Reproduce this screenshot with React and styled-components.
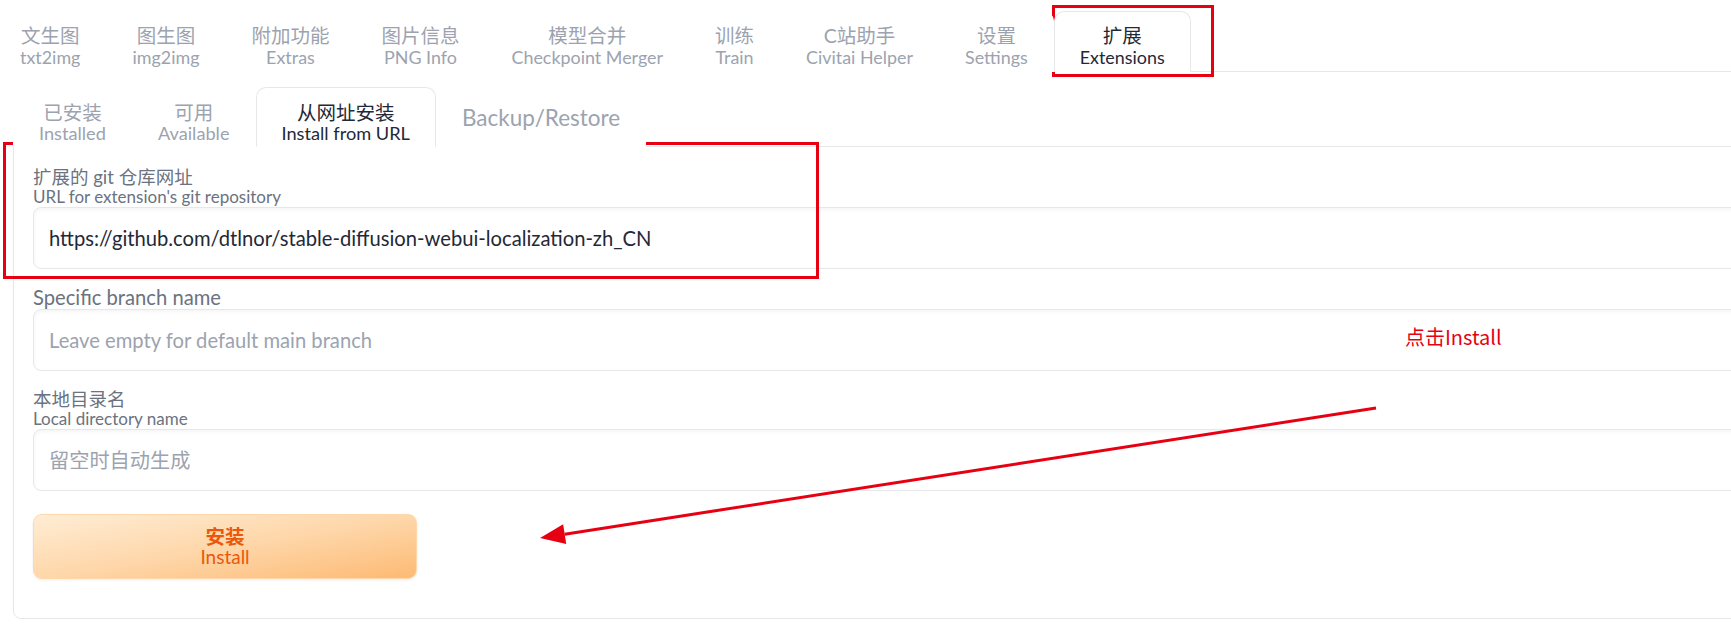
import React from 'react'
import styled, { createGlobalStyle } from 'styled-components'

const RED = '#e60012'

const GlobalStyle = createGlobalStyle`
  html, body {
    margin: 0;
    padding: 0;
    background: #ffffff;
    overflow: hidden;
  }
  body {
    font-family: Lato, "Noto Sans CJK SC", sans-serif;
    color: #1f2937;
  }
`

const Page = styled.div`
  position: relative;
  width: 1800px;
  height: 632px;
`

// ---- top level tabs ----
const TopNav = styled.nav`
  display: flex;
  align-items: flex-end;
  padding-top: 11px;
  margin-left: -6px;
  border-bottom: 1px solid #e5e7eb;
`

const Tab = styled.div`
  position: relative;
  display: flex;
  flex-direction: column;
  align-items: center;
  justify-content: center;
  padding: ${p => (p.$single ? '1px 25px 0' : p.$sub ? '14px 25px 2px' : '12px 25px 3px')};
  margin-bottom: -1px;
  border: 1px solid ${p => (p.$active ? '#e5e7eb' : 'transparent')};
  border-bottom-color: ${p => (p.$active ? '#ffffff' : 'transparent')};
  border-radius: 10px 10px 0 0;
  background: #ffffff;
  color: ${p => (p.$active ? '#1f2937' : '#9ca3af')};
  font-size: ${p => (p.$sub ? 18.2 : 17.9)}px;
  line-height: 21px;
  white-space: nowrap;
  z-index: 1;
`

const TabCn = styled.span`
  font-size: 19.5px;
  line-height: ${p => (p.$sub ? 21 : 23)}px;
`

const TabSingle = styled.span`
  font-size: 22.5px;
  line-height: 28px;
`

// ---- extensions area ----
const Section = styled.div`
  padding: 15px 0 0 13px;
`

const SubNav = styled.div`
  display: flex;
  align-items: stretch;
`

const Panel = styled.div`
  display: flex;
  flex-direction: column;
  padding: 21px 19px 39px;
  border: 1px solid #e5e7eb;
  border-radius: 0 8px 8px 8px;
`

const Field = styled.div`
  display: flex;
  flex-direction: column;
  margin-top: ${p => p.$gap || 0}px;
`

const DualLabel = styled.div`
  display: flex;
  flex-direction: column;
  color: #6b7280;
`

const LabelCn = styled.span`
  font-size: 18.5px;
  line-height: 19px;
`

const LabelEn = styled.span`
  font-size: 17px;
  line-height: 20px;
`

const Label = styled.span`
  color: #6b7280;
  font-size: 20.2px;
  line-height: 24px;
`

const TextBox = styled.input`
  box-sizing: border-box;
  width: 100%;
  height: 62px;
  padding: 0 15px;
  border: 1px solid #e5e7eb;
  border-radius: 8px;
  box-shadow: inset 0 2px 4px rgba(0, 0, 0, 0.045);
  background: #ffffff;
  font-family: inherit;
  font-size: 20.2px;
  color: #1f2937;
  outline: none;

  &::placeholder {
    color: #9ca3af;
  }
`

const InstallButton = styled.button`
  display: flex;
  flex-direction: column;
  align-items: center;
  justify-content: center;
  width: 384px;
  height: 65px;
  margin-top: 23px;
  border: 1px solid #fed7aa;
  border-radius: 9px;
  background: linear-gradient(to bottom right, #ffedd5 0%, #fed7aa 50%, #fdba74 100%);
  box-shadow: 0 1px 3px rgba(0, 0, 0, 0.08);
  color: #ea580c;
  font-family: inherit;
  cursor: pointer;
`

const BtnCn = styled.span`
  font-size: 19.5px;
  font-weight: 700;
  line-height: 20px;
`

const BtnEn = styled.span`
  font-size: 19px;
  line-height: 20px;
`

// ---- red annotations drawn over the screenshot ----
const RedBox = styled.div`
  position: absolute;
  box-sizing: border-box;
  left: ${p => p.$x}px;
  top: ${p => p.$y}px;
  width: ${p => p.$w}px;
  height: ${p => p.$h}px;
  border: 3px solid ${RED};
  pointer-events: none;
`

const Note = styled.div`
  position: absolute;
  left: 1405px;
  top: 324px;
  color: ${RED};
  font-family: "Noto Sans CJK SC", sans-serif;
  font-size: 20px;
  line-height: 26px;
`

const Overlay = styled.svg`
  position: absolute;
  left: 0;
  top: 0;
  pointer-events: none;
`

const topTabs = [
  ['文生图', 'txt2img'],
  ['图生图', 'img2img'],
  ['附加功能', 'Extras'],
  ['图片信息', 'PNG Info'],
  ['模型合并', 'Checkpoint Merger'],
  ['训练', 'Train'],
  ['C站助手', 'Civitai Helper'],
  ['设置', 'Settings'],
  ['扩展', 'Extensions'],
]

const subTabs = [
  ['已安装', 'Installed'],
  ['可用', 'Available'],
  ['从网址安装', 'Install from URL'],
]

const Arrow = () => {
  const tip = [540, 538]
  const from = [1376, 408]
  const dx = tip[0] - from[0]
  const dy = tip[1] - from[1]
  const len = Math.hypot(dx, dy)
  const ux = dx / len
  const uy = dy / len
  const bx = tip[0] - ux * 25
  const by = tip[1] - uy * 25
  const px = -uy * 10
  const py = ux * 10
  return (
    <Overlay width="1731" height="632">
      <line x1={from[0]} y1={from[1]} x2={bx} y2={by} stroke={RED} strokeWidth="3" />
      <polygon
        points={`${tip[0]},${tip[1]} ${bx + px},${by + py} ${bx - px},${by - py}`}
        fill={RED}
      />
    </Overlay>
  )
}

const App = () => {
  return (
    <Page>
      <GlobalStyle />
      <TopNav>
        {topTabs.map(([cn, en]) => (
          <Tab key={en} $active={en === 'Extensions'}>
            <TabCn>{cn}</TabCn>
            <span>{en}</span>
          </Tab>
        ))}
      </TopNav>

      <Section>
        <SubNav>
          {subTabs.map(([cn, en]) => (
            <Tab key={en} $sub $active={en === 'Install from URL'}>
              <TabCn $sub>{cn}</TabCn>
              <span>{en}</span>
            </Tab>
          ))}
          <Tab $sub $single>
            <TabSingle>Backup/Restore</TabSingle>
          </Tab>
        </SubNav>

        <Panel>
          <Field>
            <DualLabel>
              <LabelCn>扩展的 git 仓库网址</LabelCn>
              <LabelEn>URL for extension's git repository</LabelEn>
            </DualLabel>
            <TextBox readOnly value="https://github.com/dtlnor/stable-diffusion-webui-localization-zh_CN" />
          </Field>

          <Field $gap={16}>
            <Label>Specific branch name</Label>
            <TextBox readOnly placeholder="Leave empty for default main branch" />
          </Field>

          <Field $gap={19}>
            <DualLabel>
              <LabelCn>本地目录名</LabelCn>
              <LabelEn>Local directory name</LabelEn>
            </DualLabel>
            <TextBox readOnly placeholder="留空时自动生成" />
          </Field>

          <InstallButton>
            <BtnCn>安装</BtnCn>
            <BtnEn>Install</BtnEn>
          </InstallButton>
        </Panel>
      </Section>

      <RedBox $x={1052} $y={5} $w={162} $h={72} />
      <RedBox $x={3} $y={142} $w={816} $h={137} />
      <Note>点击Install</Note>
      <Arrow />
    </Page>
  )
}

export default App
